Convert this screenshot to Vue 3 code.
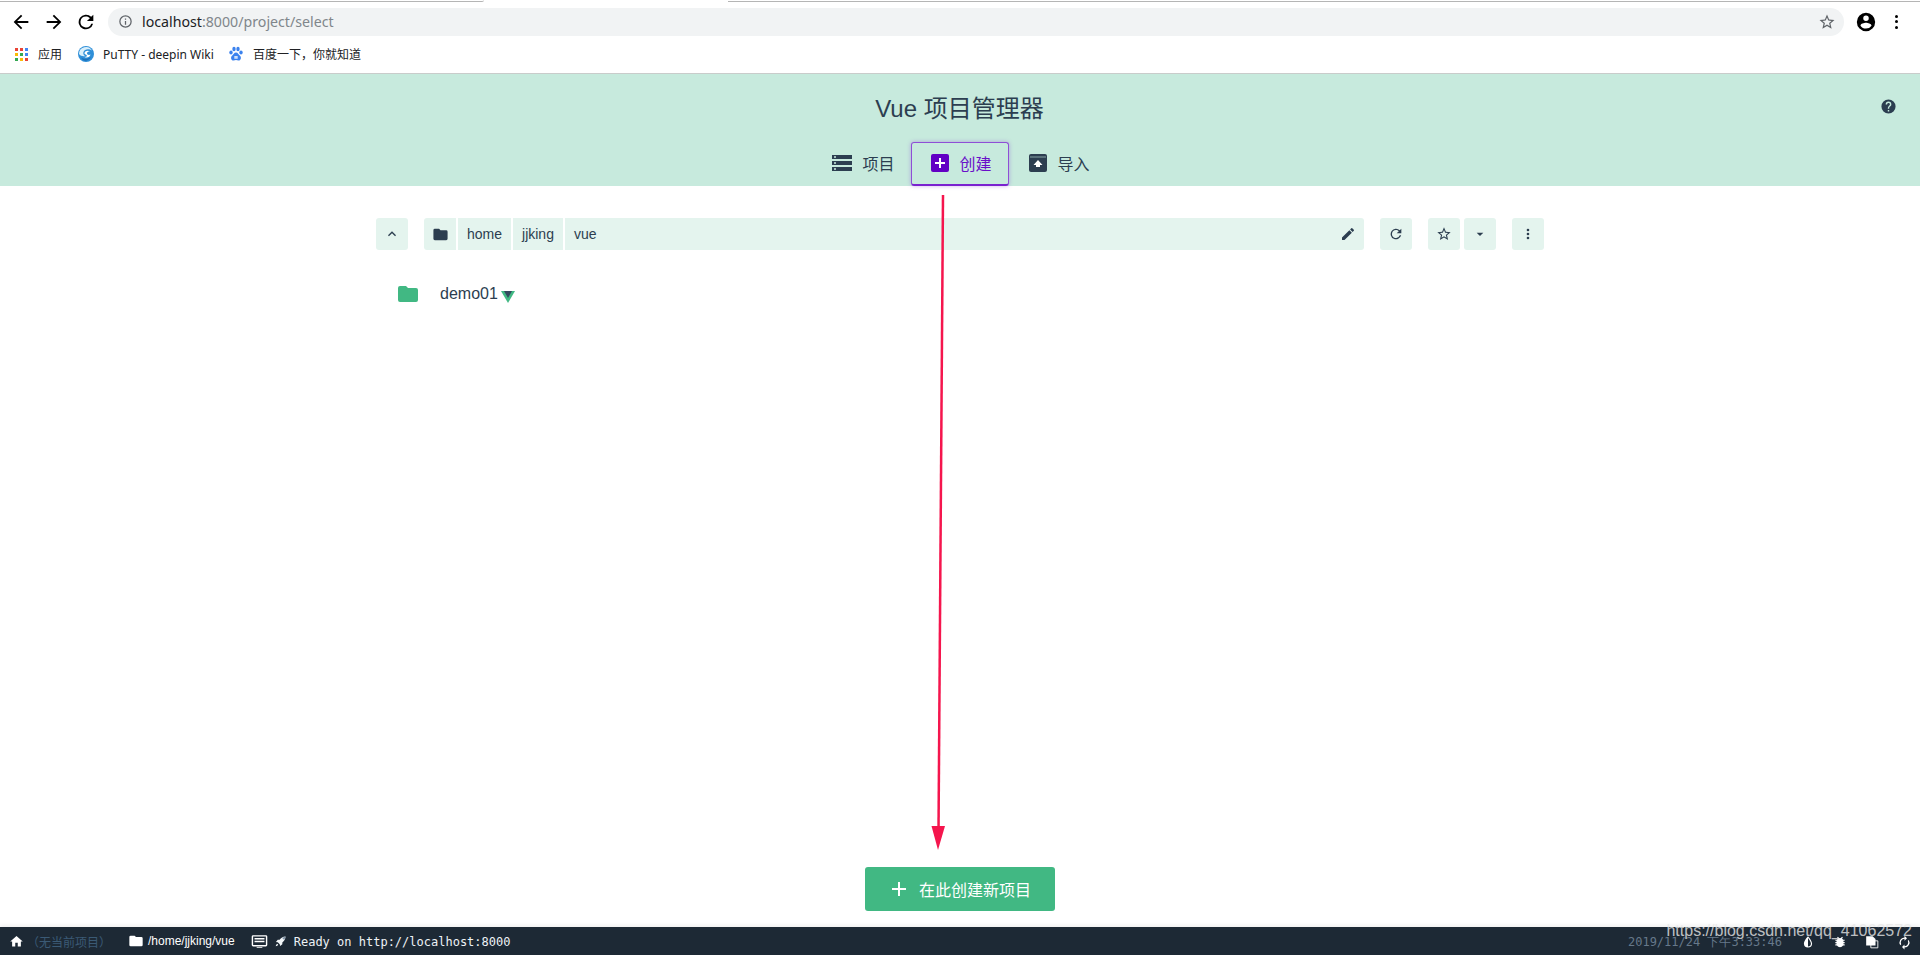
<script setup>
const crumbs = ['home', 'jjking']
const googleDots = ['#ea4335','#ea4335','#4285f4','#fbbc05','#34a853','#4285f4','#34a853','#fbbc05','#ea4335']
</script>

<template>
  <div class="page">
    <header class="browser">
      <div class="tabline"><span class="tabcurve"></span></div>
      <div class="toolbar">
        <svg class="navicon" viewBox="0 0 24 24"><path d="M20 11H7.800l5.600-5.600L12 4l-8 8 8 8 1.400-1.400L7.800 13H20z"/></svg>
        <svg class="navicon" viewBox="0 0 24 24"><path d="M4 11h12.200l-5.600-5.600L12 4l8 8-8 8-1.400-1.400 5.600-5.600H4z"/></svg>
        <svg class="navicon" viewBox="0 0 24 24"><path d="M17.650 6.350A8 8 0 1 0 19.730 14h-2.080A6 6 0 1 1 12 6c1.660 0 3.140.69 4.220 1.780L13 11h7V4z"/></svg>
        <div class="omnibox">
          <svg class="info" viewBox="0 0 24 24"><path d="M11 7h2v2h-2zm0 4h2v6h-2zm1-9a10 10 0 1 0 0 20 10 10 0 0 0 0-20zm0 18a8 8 0 1 1 0-16 8 8 0 0 1 0 16z"/></svg>
          <span class="url"><b>localhost</b>:8000/project/select</span>
          <svg class="ostar" viewBox="0 0 24 24"><path d="M22 9.240l-7.190-.62L12 2 9.190 8.630 2 9.240l5.460 4.730L5.820 21 12 17.270 18.180 21l-1.630-7.030zM12 15.400l-3.760 2.270 1-4.280-3.320-2.880 4.380-.38L12 6.100l1.710 4.040 4.380.38-3.320 2.880 1 4.280z"/></svg>
        </div>
        <svg class="avatar" viewBox="0 0 24 24"><path d="M12 2a10 10 0 1 0 0 20 10 10 0 0 0 0-20zm0 3a3 3 0 1 1 0 6 3 3 0 0 1 0-6zm0 14.200a7.200 7.200 0 0 1-6-3.220c.03-2 4-3.080 6-3.080s5.970 1.090 6 3.080a7.200 7.200 0 0 1-6 3.220z"/></svg>
        <span class="kebab"><i></i><i></i><i></i></span>
      </div>
      <div class="bookmarks">
        <span class="bookmark apps">
          <span class="grid"><i v-for="(c, i) in googleDots" :key="i" :style="{ background: c }"></i></span>
          应用
        </span>
        <span class="bookmark putty">
          <svg class="favicon" viewBox="0 0 16 16">
            <circle cx="8" cy="8" r="8" fill="#2f8fd8"/>
            <path d="M1 8a7 7 0 0 1 13-3.500C11 2.500 6.500 3 5.500 6 4.800 8 6 9.500 7.500 10 5 10.500 2.500 10 1 8z" fill="#d9effb"/>
            <path d="M6.500 7c.5-2 3.500-2.800 5.500-1.500-1.500-.2-3 .5-3 1.800 0 1.500 2 2 3.500 1.200C12 11 9 12.500 6.500 11c2 0 3-1 2-2S6.300 8.500 6.500 7z" fill="#fff"/>
            <path d="M3 11.500c2.500 1.500 6.500 2 10-.5-1.500 2.500-3.500 3.800-5.500 3.800S4 13.500 3 11.500z" fill="#1b6fb8"/>
          </svg>
          PuTTY - deepin Wiki
        </span>
        <span class="bookmark baidu">
          <svg class="favicon" viewBox="0 0 16 16" fill="#3b82ee">
            <ellipse cx="3" cy="6.500" rx="1.700" ry="2.100"/>
            <ellipse cx="6" cy="3" rx="1.700" ry="2.200"/>
            <ellipse cx="10" cy="3" rx="1.700" ry="2.200"/>
            <ellipse cx="13" cy="6.500" rx="1.700" ry="2.100"/>
            <path d="M8 6.500c-2 0-2.500 2-4 3.200-1.500 1.300-1.200 4.800 1.500 4.800 1 0 1.700-.4 2.500-.4s1.500.4 2.500.4c2.700 0 3-3.500 1.500-4.800C10.500 8.500 10 6.500 8 6.500z"/>
            <path d="M6.300 10h3.400v2.800H6.300z" fill="#cfe0fb"/>
          </svg>
          百度一下，你就知道
        </span>
      </div>
    </header>

    <section class="banner">
      <h1 class="title">Vue 项目管理器</h1>
      <svg class="help" viewBox="0 0 24 24"><path d="M12 2a10 10 0 1 0 0 20 10 10 0 0 0 0-20zm1 17h-2v-2h2zm2.070-7.750-.9.920C13.450 12.900 13 13.500 13 15h-2v-.5c0-1.100.45-2.100 1.170-2.830l1.240-1.260A2 2 0 1 0 10 9H8a4 4 0 1 1 8 0c0 .88-.36 1.680-.93 2.250z"/></svg>
      <nav class="tabs">
        <div class="tab">
          <svg class="tabicon" viewBox="0 0 20 16"><path d="M0 0h20v4H0zM0 6h20v4H0zM0 12h20v4H0z"/><path d="M2 1.300h2v1.400H2zM2 7.300h2v1.400H2zM2 13.300h2v1.400H2z" fill="#c7eadd"/></svg>
          <span>项目</span>
        </div>
        <div class="tab active">
          <svg class="tabicon square" viewBox="0 0 18 18"><rect width="18" height="18" rx="2"/><path d="M8 4h2v4h4v2h-4v4H8v-4H4V8h4z" fill="#fff"/></svg>
          <span>创建</span>
        </div>
        <div class="tab">
          <svg class="tabicon square" viewBox="0 0 18 18"><path d="M2 0h14a2 2 0 0 1 2 2v14a2 2 0 0 1-2 2H2a2 2 0 0 1-2-2V2a2 2 0 0 1 2-2z"/><path d="M1 3h16" stroke="#c7eadd" stroke-width=".6"/><path d="M9 6l4.500 5H11v2H7v-2H4.500z" fill="#fff"/></svg>
          <span>导入</span>
        </div>
      </nav>
    </section>

    <main class="content">
      <div class="pathbar">
        <button class="btn">
          <svg class="ic" viewBox="0 0 24 24"><path d="M12 8l-6 6 1.400 1.400L12 10.800l4.600 4.600L18 14z"/></svg>
        </button>
        <div class="path">
          <span class="seg first">
            <svg class="ic folder" viewBox="0 0 24 24"><path d="M10 4H4a2 2 0 0 0-2 2v12a2 2 0 0 0 2 2h16a2 2 0 0 0 2-2V8a2 2 0 0 0-2-2h-8z"/></svg>
          </span>
          <span v-for="c in crumbs" :key="c" class="seg">{{ c }}</span>
          <span class="seg rest">
            <span>vue</span>
            <svg class="ic pencil" viewBox="0 0 24 24"><path d="M3 17.250V21h3.750L17.810 9.940l-3.750-3.750zM20.710 7.040a1 1 0 0 0 0-1.410l-2.340-2.340a1 1 0 0 0-1.410 0l-1.830 1.830 3.750 3.750z"/></svg>
          </span>
        </div>
        <button class="btn">
          <svg class="ic" viewBox="0 0 24 24"><path d="M17.650 6.350A8 8 0 1 0 19.730 14h-2.080A6 6 0 1 1 12 6c1.660 0 3.140.69 4.220 1.780L13 11h7V4z"/></svg>
        </button>
        <div class="pair">
          <button class="btn">
            <svg class="ic" viewBox="0 0 24 24"><path d="M22 9.240l-7.190-.62L12 2 9.190 8.630 2 9.240l5.460 4.730L5.820 21 12 17.270 18.180 21l-1.630-7.030zM12 15.400l-3.760 2.270 1-4.280-3.320-2.880 4.380-.38L12 6.100l1.710 4.040 4.380.38-3.320 2.880 1 4.280z"/></svg>
          </button>
          <button class="btn">
            <svg class="ic" viewBox="0 0 24 24"><path d="M7 10l5 5 5-5z"/></svg>
          </button>
        </div>
        <button class="btn">
          <svg class="ic" viewBox="0 0 24 24"><path d="M12 8a2 2 0 1 0 0-4 2 2 0 0 0 0 4zm0 2a2 2 0 1 0 0 4 2 2 0 0 0 0-4zm0 6a2 2 0 1 0 0 4 2 2 0 0 0 0-4z"/></svg>
        </button>
      </div>

      <div class="entry">
        <svg class="entry-folder" viewBox="0 0 24 24"><path d="M10 4H4a2 2 0 0 0-2 2v12a2 2 0 0 0 2 2h16a2 2 0 0 0 2-2V8a2 2 0 0 0-2-2h-8z"/></svg>
        <span class="entry-name">demo01</span>
        <svg class="vue-logo" viewBox="0 0 14 12">
          <path d="M0 0h14L7 12z" fill="#41b883"/>
          <path d="M3 0h8L7 6.900z" fill="#34495e"/>
        </svg>
      </div>

      <div class="actions">
        <button class="create">
          <svg class="plus" viewBox="0 0 14 14"><path d="M6 0h2v6h6v2H8v6H6V8H0V6h6z"/></svg>
          在此创建新项目
        </button>
      </div>
    </main>

    <footer class="status">
      <svg class="st-home" viewBox="0 0 24 24"><path d="M10 20v-6h4v6h5v-8h3L12 3 2 12h3v8z"/></svg>
      <span class="st-project">（无当前项目）</span>
      <svg class="st-folder" viewBox="0 0 24 24"><path d="M10 4H4a2 2 0 0 0-2 2v12a2 2 0 0 0 2 2h16a2 2 0 0 0 2-2V8a2 2 0 0 0-2-2h-8z"/></svg>
      <span class="st-path">/home/jjking/vue</span>
      <svg class="st-console" viewBox="0 0 24 24"><path d="M21 3H3a2 2 0 0 0-2 2v12a2 2 0 0 0 2 2h18a2 2 0 0 0 2-2V5a2 2 0 0 0-2-2zm0 14H3V5h18zM5 7h14v2H5zm0 4h14v2H5zM8 20h8v1H8z"/></svg>
      <svg class="st-rocket" viewBox="0 0 12 12">
        <path d="M11.500.5c-3 .2-5 1.500-6.500 3.500L3 4 1 6.500l2 .3 2.200 2.200.3 2L8 9V7c2-1.500 3.300-3.500 3.500-6.500z"/>
        <path d="M8 2.500c.5-.8 2-1.500 3.500-2-.2 1.500-.9 3-1.700 3.600z" fill="#7f93a6"/>
        <path d="M2.500 8.500C1.500 9 1 10 .8 11.200 2 11 3 10.500 3.500 9.500z"/>
      </svg>
      <span class="st-log">Ready on http://localhost:8000</span>
      <span class="st-right">
        <span class="st-time">2019/11/24 下午3:33:46</span>
        <svg class="st-ic" viewBox="0 0 24 24"><path d="M12 2S5 9.500 5 14.500a7 7 0 0 0 14 0C19 9.500 12 2 12 2zm0 17.500V5c2 2.500 5 6.800 5 9.500a5 5 0 0 1-5 5z"/></svg>
        <svg class="st-ic" viewBox="0 0 24 24"><path d="M20 8h-2.800a6 6 0 0 0-1.800-2l1.600-1.600L15.600 3l-2.200 2.200a6 6 0 0 0-2.800 0L8.400 3 7 4.400 8.600 6a6 6 0 0 0-1.800 2H4v2h2.100v2H4v2h2.100v2H4v2h2.800a6 6 0 0 0 10.400 0H20v-2h-2.100v-2H20v-2h-2.100v-2H20z"/></svg>
        <svg class="st-ic" viewBox="0 0 24 24"><path d="M2 2h11l5 5v11H2z"/><path d="M10 10h12v12H10z" fill="none" stroke="#fff" stroke-width="1.500"/></svg>
        <svg class="st-ic wide" viewBox="0 0 24 24"><path d="M12 6v3l4-4-4-4v3a8 8 0 0 0-6.800 12.200L6.700 14.700A6 6 0 0 1 12 6zm6.800 1.800l-1.500 1.500A6 6 0 0 1 12 18v-3l-4 4 4 4v-3a8 8 0 0 0 6.800-12.200z"/></svg>
      </span>
      <span class="watermark">https://blog.csdn.net/qq_41062572</span>
    </footer>

    <svg class="arrow" viewBox="0 0 1920 955">
      <path d="M943 195L938.500 832" stroke="#f5154d" stroke-width="2.500" fill="none"/>
      <path d="M931.500 826h13.500l-7 24z" fill="#f5154d"/>
    </svg>
  </div>
</template>

<style>
html, body { margin: 0; padding: 0; background: #fff; overflow: hidden; }
</style>

<style scoped>
.page {
  position: relative;
  width: 1920px;
  height: 955px;
  display: flex;
  flex-direction: column;
  overflow: hidden;
  font-family: "Liberation Sans", "Noto Sans CJK SC", sans-serif;
  color: #2c3e50;
}
.browser { height: 74px; flex: none; box-sizing: border-box; border-bottom: 1px solid #c9cccb; background: #fff; }
.tabline { height: 2px; position: relative; }
.tabcurve { position: absolute; left: 0; top: 0; width: 484px; height: 2px; border-bottom: 1px solid #b5b5b5; border-radius: 0 0 6px 0; box-sizing: border-box; }
.tabline::after { content: ""; position: absolute; left: 728px; right: 0; top: 0; height: 2px; border-bottom: 1px solid #b5b5b5; box-sizing: border-box; }
.toolbar { height: 35px; margin-top: 2px; display: flex; align-items: center; }
.navicon { width: 22px; height: 22px; fill: #000; margin-left: 10px; flex: none; }
.navicon + .navicon { margin-left: 11px; }
.navicon + .navicon + .navicon { margin-left: 10px; }
.omnibox {
  margin-left: 11px; width: 1736px; height: 28px; border-radius: 14px; background: #f1f3f4;
  display: flex; align-items: center; padding: 0 10px 0 10px; box-sizing: border-box; flex: none;
}
.info { width: 15px; height: 15px; fill: #5f6368; margin-right: 9px; }
.url { font-family: "Noto Sans", sans-serif; font-size: 14.200px; color: #80868b; flex: 1; }
.url b { font-weight: 400; color: #202124; }
.ostar { width: 18px; height: 18px; fill: #5f6368; margin-right: -2px; }
.avatar { width: 22px; height: 22px; fill: #000; margin-left: 11px; flex: none; }
.kebab { display: flex; flex-direction: column; gap: 2.500px; margin-left: 18px; }
.kebab i { width: 3px; height: 3px; background: #000; border-radius: 50%; }
.bookmarks { height: 30px; display: flex; align-items: center; font-family: "Noto Sans", "Noto Sans CJK SC", sans-serif; font-size: 12px; color: #202124; }
.bookmark { display: flex; align-items: center; gap: 10px; flex: none; }
.apps { margin-left: 15px; }
.putty { margin-left: 16px; gap: 9px; }
.baidu { margin-left: 14px; gap: 9px; }
.grid { display: grid; grid-template-columns: repeat(3, 3px); grid-auto-rows: 3px; gap: 2px; }
.favicon { width: 16px; height: 16px; }

.banner { height: 112px; flex: none; position: relative; background: #c7eadd; display: flex; flex-direction: column; align-items: center; box-sizing: border-box; padding-top: 21px; }
.title { margin: 0; font-size: 24px; font-weight: 400; line-height: 28px; color: #2c3e50; margin-left: -1px; }
.help { position: absolute; right: 23px; top: 24px; width: 17px; height: 17px; fill: #2c3e50; }
.tabs { margin-top: 19px; display: flex; align-items: stretch; gap: 0; height: 44px; margin-left: -1px; }
.tab { display: flex; align-items: center; gap: 10px; padding: 0 14px 2px 18px; font-size: 16px; color: #2c3e50; box-sizing: border-box; width: 98px; justify-content: center; }
.tabicon { width: 20px; height: 16px; fill: #2c3e50; flex: none; }
.tabicon.square { width: 18px; height: 18px; }
.tab.active { color: #6a0fc9; border: 1px solid #8e4fd6; border-bottom-width: 2px; border-bottom-color: #7a22cf; border-radius: 3px; box-shadow: 0 0 4px rgba(122, 34, 207, .35); }
.tab.active .tabicon { fill: #6200c4; }

.content { flex: 1; position: relative; display: flex; flex-direction: column; min-height: 0; box-sizing: border-box; padding: 32px 376px 0; }
.pathbar { display: flex; gap: 16px; height: 32px; align-items: stretch; }
.btn { width: 32px; height: 32px; border: 0; padding: 0; margin: 0; border-radius: 3px; background: #e4f4ee; display: flex; align-items: center; justify-content: center; flex: none; }
.ic { width: 16px; height: 16px; fill: #2c3e50; }
.path { flex: 1; display: flex; gap: 2px; min-width: 0; }
.seg { background: #e4f4ee; display: flex; align-items: center; padding: 0 9px; font-size: 14px; color: #2c3e50; }
.seg.first { width: 32px; padding: 0; justify-content: center; border-radius: 3px 0 0 3px; box-sizing: border-box; }
.folder { width: 17px; height: 17px; }
.seg.rest { flex: 1; justify-content: space-between; padding-right: 8px; border-radius: 0 3px 3px 0; }
.pencil { width: 16px; height: 16px; }
.pair { display: flex; gap: 4px; }
.entry { height: 44px; margin-top: 22px; display: flex; align-items: center; padding-left: 20px; }
.entry-folder { width: 24px; height: 24px; fill: #41b883; flex: none; }
.entry-name { margin-left: 20px; font-size: 16px; color: #2c3e50; }
.vue-logo { width: 14px; height: 12px; margin-left: 3px; margin-top: 5px; flex: none; }
.actions { margin-top: auto; display: flex; justify-content: center; padding: 0 0 16px; }
.create { width: 190px; height: 44px; border: 0; border-radius: 3px; background: #41b883; color: #fff; font-family: "Noto Sans CJK SC", sans-serif; font-size: 16px; display: flex; align-items: center; justify-content: center; gap: 13px; padding: 0 0 0 3px; }
.plus { width: 14px; height: 14px; fill: #fff; }

.status { height: 28px; flex: none; position: relative; background: #1d2935; display: flex; align-items: center; color: #fff; box-shadow: 0 -2px 4px rgba(0, 0, 0, .06); }
.st-home { width: 15px; height: 15px; fill: #fff; margin-left: 9px; flex: none; }
.st-project { font-size: 12px; color: #3b5a75; margin-left: 3px; width: 84px; flex: none; }
.st-folder { width: 16px; height: 16px; fill: #fff; margin-left: 17px; flex: none; }
.st-path { font-size: 12px; margin-left: 4px; }
.st-console { width: 17px; height: 17px; fill: #fff; margin-left: 16px; flex: none; }
.st-rocket { width: 11px; height: 11px; fill: #f2f6f8; margin-left: 7px; flex: none; }
.st-log { font-family: "DejaVu Sans Mono", monospace; font-size: 12px; margin-left: 8px; color: #eef2f5; white-space: nowrap; margin-top: 2px; }
.st-right { margin-left: auto; display: flex; align-items: center; margin-top: 2px; }
.st-time { font-family: "DejaVu Sans Mono", monospace; font-size: 12px; color: #66788a; margin-right: 19px; white-space: nowrap; }
.st-ic { width: 14px; height: 14px; fill: #fff; margin-right: 18px; flex: none; }
.st-ic.wide { width: 15px; height: 15px; margin-right: 8px; }
.watermark { position: absolute; right: 8px; top: -5px; font-size: 16px; color: rgba(232, 232, 232, .8); white-space: nowrap; }
.arrow { position: absolute; left: 0; top: 0; width: 1920px; height: 955px; pointer-events: none; }
</style>
